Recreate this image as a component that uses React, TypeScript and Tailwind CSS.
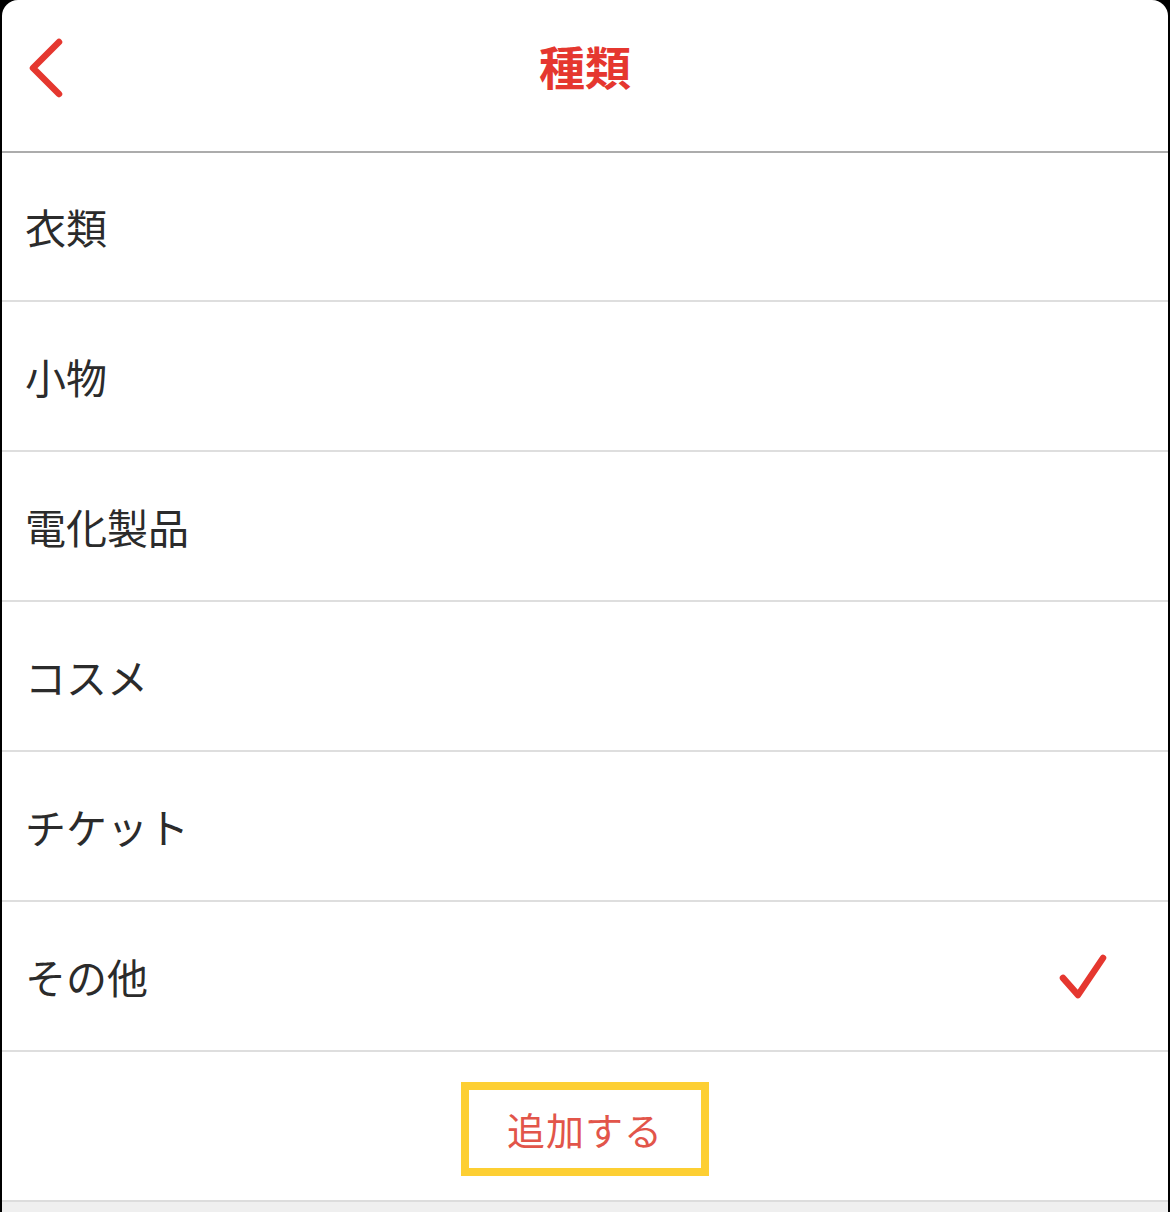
import React from "react";

const items = ["衣類", "小物", "電化製品", "コスメ", "チケット", "その他"];

export default function App() {
  return (
    <div
      className="w-[1170px] h-[1212px] bg-black overflow-hidden"
      style={{ fontFamily: '"Noto Sans CJK JP", "Noto Sans", sans-serif' }}
    >
      <div className="mx-[2px] h-full bg-white rounded-t-[16px] flex flex-col overflow-hidden">
        <div className="h-[153px] shrink-0 relative flex items-center justify-center border-b-2 border-[#acacac]">
          <svg
            className="absolute left-[23px] top-[37px]"
            width="44"
            height="62"
            viewBox="0 0 44 62"
          >
            <path
              d="M34 5 L8 31 L34 57"
              fill="none"
              stroke="#e5372f"
              strokeWidth="6.5"
              strokeLinecap="round"
              strokeLinejoin="round"
            />
          </svg>
          <span className="text-[46px] font-bold text-[#e5372f] leading-none -mt-[22px]">
            種類
          </span>
        </div>
        {items.map((t, i) => (
          <div
            key={t}
            className={`${i === 0 ? "h-[149px]" : "h-[150px]"} shrink-0 flex items-center justify-between border-b-2 border-[#dedede] pl-[23px] pr-[58px]`}
          >
            <span className="text-[41px] text-[#2b2b2b] leading-none">{t}</span>
            {i === items.length - 1 && (
              <svg width="52" height="52" viewBox="0 0 52 52" className="mt-[2px]">
                <path
                  d="M5 27 L20 44 L45 7"
                  fill="none"
                  stroke="#e5372f"
                  strokeWidth="6.5"
                  strokeLinecap="round"
                  strokeLinejoin="round"
                />
              </svg>
            )}
          </div>
        ))}
        <div className="h-[148px] shrink-0 flex items-center justify-center pt-[5px]">
          <div className="w-[248px] h-[94px] border-[8px] border-[#fdcf33] flex items-center justify-center">
            <span className="text-[38px] text-[#e2554a] leading-none tracking-[1px]">
              追加する
            </span>
          </div>
        </div>
        <div className="flex-1 bg-[#efefef] border-t-2 border-[#dcdcdc]" />
      </div>
    </div>
  );
}
